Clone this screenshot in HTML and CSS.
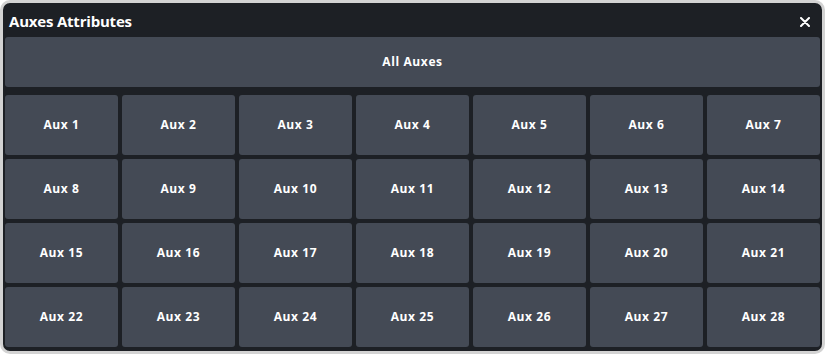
FILE: index.html
```html
<!DOCTYPE html>
<html lang="en">
<head>
    <meta charset="UTF-8">
    <title>Auxes Attributes</title>
    <link rel="stylesheet" href="styles.css">
</head>
<body>
    <div class="dialog">
        <div class="dialog-header">
            <span class="dialog-title">Auxes Attributes</span>
            <svg class="dialog-close" width="10" height="10" viewBox="0 0 10 10">
                <path d="M1 1 L9 9 M9 1 L1 9" stroke="#ffffff" stroke-width="2" stroke-linecap="round"/>
            </svg>
        </div>
        <div class="dialog-body">
            <button class="all-btn">All Auxes</button>
            <div class="aux-grid" id="aux-grid"></div>
        </div>
    </div>

    <script>
        const grid = document.getElementById('aux-grid');
        for (let i = 1; i <= 28; i++) {
            grid.innerHTML += `<button class="aux-btn">Aux ${i}</button>`;
        }
    </script>
</body>
</html>
```

FILE: styles.css
```css
body {
    margin: 0;
    background-color: #ffffff;
    font-family: 'Open Sans', 'Noto Sans', sans-serif;
}

.dialog {
    width: 825px;
    height: 354px;
    box-sizing: border-box;
    border: 3px solid #d3d3d3;
    border-radius: 10px;
    background-color: #1d2025;
    overflow: hidden;
    display: flex;
    flex-direction: column;
}

.dialog-header {
    height: 34px;
    display: flex;
    align-items: center;
    justify-content: space-between;
    padding: 0 12px 0 6px;
    color: #ffffff;
}

.dialog-title {
    font-size: 15px;
    font-weight: 700;
    letter-spacing: -0.2px;
    margin-top: 1px;
}

.dialog-close {
    margin-top: 4px;
}

.dialog-body {
    padding: 0 2px;
}

button {
    background-color: #444a55;
    color: #ffffff;
    border: none;
    border-radius: 3px;
    padding: 0 0 2px;
    font-family: 'Open Sans', 'Noto Sans', sans-serif;
    font-size: 12px;
    font-weight: 700;
    letter-spacing: 0.6px;
    cursor: pointer;
}

.all-btn {
    display: block;
    width: 100%;
    height: 50px;
    margin-bottom: 8px;
}

.aux-grid {
    display: grid;
    grid-template-columns: repeat(7, 1fr);
    grid-auto-rows: 60px;
    gap: 4px;
}
```
